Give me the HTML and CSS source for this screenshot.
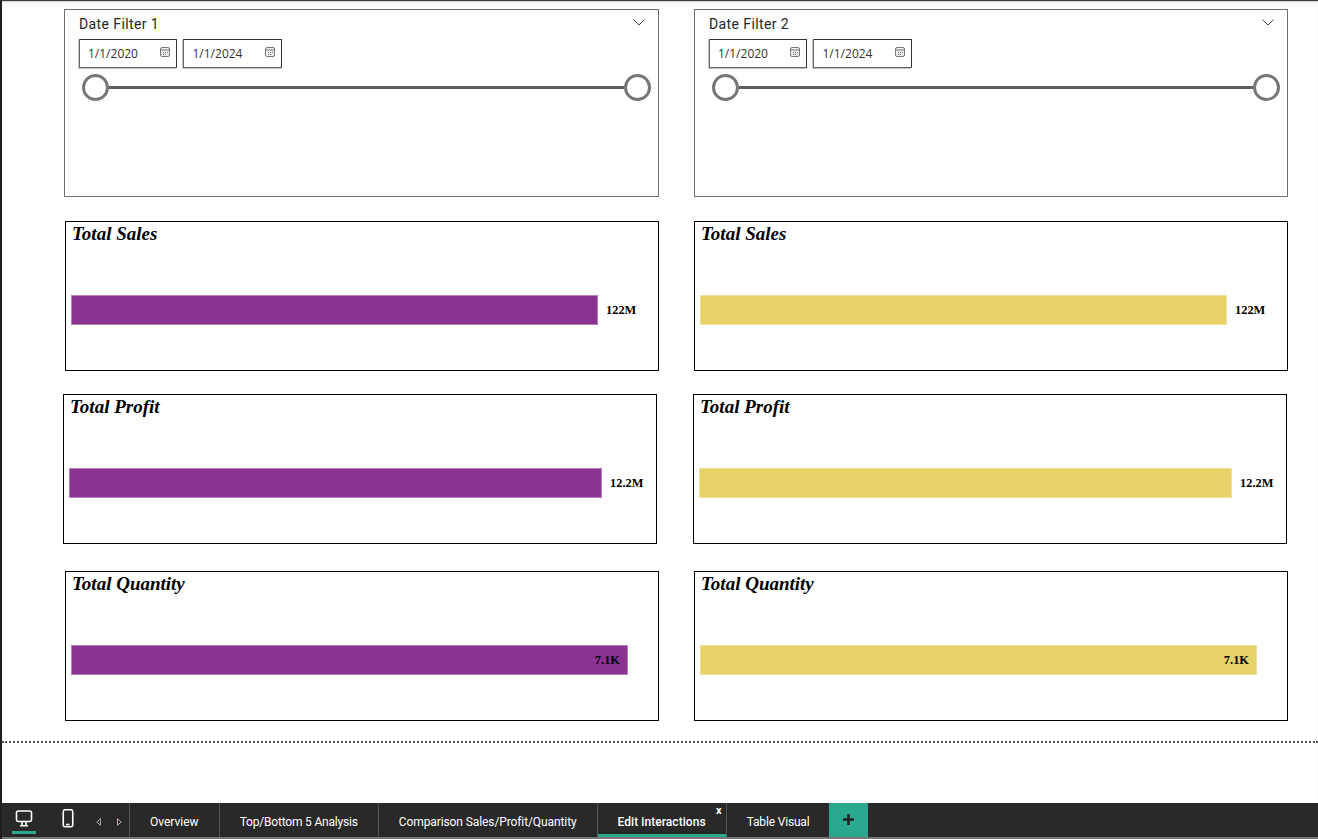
FILE: index.html
```html
<!DOCTYPE html>
<html>

<head>
    <meta charset="utf-8">
    <title>Edit interactions</title>
    <link rel="stylesheet" href="styles.css">
</head>

<body>
    <div class="app">
        <div class="canvas">
            <div class="row row-slicers">
                <div class="slicer">
                    <div class="slicer-head">
                        <span class="slicer-title">Date Filter 1</span>
                        <svg class="chevron" width="12" height="7" viewBox="0 0 12 7"><path d="M0.5 0.5 L6 6 L11.5 0.5" /></svg>
                    </div>
                    <div class="dates">
                        <div class="date"><span>1/1/2020</span><svg class="cal" width="10" height="10" viewBox="0 0 10 10"><rect x="0.5" y="0.5" width="9" height="9" rx="1.5" /><path d="M0.5 3 H9.5 M3 5.5 H4 M5 5.5 H6 M7 5.5 H8 M3 7.5 H4 M5 7.5 H6" /></svg></div>
                        <div class="date"><span>1/1/2024</span><svg class="cal" width="10" height="10" viewBox="0 0 10 10"><rect x="0.5" y="0.5" width="9" height="9" rx="1.5" /><path d="M0.5 3 H9.5 M3 5.5 H4 M5 5.5 H6 M7 5.5 H8 M3 7.5 H4 M5 7.5 H6" /></svg></div>
                    </div>
                    <div class="slider"><span class="thumb"></span><span class="track"></span><span class="thumb"></span></div>
                </div>
                <div class="slicer">
                    <div class="slicer-head">
                        <span class="slicer-title">Date Filter 2</span>
                        <svg class="chevron" width="12" height="7" viewBox="0 0 12 7"><path d="M0.5 0.5 L6 6 L11.5 0.5" /></svg>
                    </div>
                    <div class="dates">
                        <div class="date"><span>1/1/2020</span><svg class="cal" width="10" height="10" viewBox="0 0 10 10"><rect x="0.5" y="0.5" width="9" height="9" rx="1.5" /><path d="M0.5 3 H9.5 M3 5.5 H4 M5 5.5 H6 M7 5.5 H8 M3 7.5 H4 M5 7.5 H6" /></svg></div>
                        <div class="date"><span>1/1/2024</span><svg class="cal" width="10" height="10" viewBox="0 0 10 10"><rect x="0.5" y="0.5" width="9" height="9" rx="1.5" /><path d="M0.5 3 H9.5 M3 5.5 H4 M5 5.5 H6 M7 5.5 H8 M3 7.5 H4 M5 7.5 H6" /></svg></div>
                    </div>
                    <div class="slider"><span class="thumb"></span><span class="track"></span><span class="thumb"></span></div>
                </div>
            </div>

            <div class="row row-sales">
                <div class="card">
                    <div class="card-title">Total Sales</div>
                    <div class="bar-line">
                        <div class="bar purple" style="width: 527px"></div>
                        <span class="bar-value">122M</span>
                    </div>
                </div>
                <div class="card">
                    <div class="card-title">Total Sales</div>
                    <div class="bar-line">
                        <div class="bar yellow" style="width: 527px"></div>
                        <span class="bar-value">122M</span>
                    </div>
                </div>
            </div>

            <div class="row row-profit">
                <div class="card">
                    <div class="card-title">Total Profit</div>
                    <div class="bar-line">
                        <div class="bar purple" style="width: 533px"></div>
                        <span class="bar-value">12.2M</span>
                    </div>
                </div>
                <div class="card">
                    <div class="card-title">Total Profit</div>
                    <div class="bar-line">
                        <div class="bar yellow" style="width: 533px"></div>
                        <span class="bar-value">12.2M</span>
                    </div>
                </div>
            </div>

            <div class="row row-quantity">
                <div class="card">
                    <div class="card-title">Total Quantity</div>
                    <div class="bar-line">
                        <div class="bar purple" style="width: 557px"><span class="bar-value">7.1K</span></div>
                    </div>
                </div>
                <div class="card">
                    <div class="card-title">Total Quantity</div>
                    <div class="bar-line">
                        <div class="bar yellow" style="width: 557px"><span class="bar-value">7.1K</span></div>
                    </div>
                </div>
            </div>

            <div class="page-end"></div>
        </div>

        <div class="tabbar">
            <div class="views">
                <div class="view view-active">
                    <svg width="18" height="18" viewBox="0 0 18 18"><rect x="1.5" y="2" width="15" height="10.5" rx="2" /><path d="M5 16.8 H13 M7 12.5 V16 M11 12.5 V16" /></svg>
                </div>
                <div class="view view-phone">
                    <svg width="12" height="19" viewBox="0 0 12 19"><rect x="1.25" y="0.75" width="9.5" height="17" rx="2" /><path d="M4 15.5 H7.5" /></svg>
                </div>
                <div class="arrows">
                    <svg width="5" height="8" viewBox="0 0 5 8"><path d="M4.5 0.7 L0.8 4 L4.5 7.3 Z" /></svg>
                    <svg class="arrow-next" width="5" height="8" viewBox="0 0 5 8"><path d="M0.5 0.7 L4.2 4 L0.5 7.3 Z" /></svg>
                </div>
            </div>
            <div class="tab">Overview</div>
            <div class="tab tab-top">Top/Bottom 5 Analysis</div>
            <div class="tab tab-comparison">Comparison Sales/Profit/Quantity</div>
            <div class="tab tab-active">Edit interactions<span class="tab-close">x</span></div>
            <div class="tab tab-last">Table Visual</div>
            <div class="tab-add">
                <svg width="11" height="11" viewBox="0 0 11 11"><path d="M5.5 0 V11 M0 5.5 H11" /></svg>
            </div>
        </div>
    </div>
</body>

</html>
```

FILE: styles.css
```css
* {
    box-sizing: border-box;
}

body {
    margin: 0;
    background-color: white;
    overflow: hidden;
}

.app {
    display: flex;
    flex-direction: column;
    height: 839px;
    border-left: 2px solid #1f1f1f;
}

.canvas {
    flex: 1;
    border-top: 1px solid #3a3a3a;
    box-shadow: inset 0 2px 2px -1px #cfcfcf;
    padding-top: 8px;
}

.row {
    display: flex;
    gap: 35px;
    padding-left: 63px;
}

.row-slicers {
    padding-left: 62px;
}

.row-sales {
    margin-top: 24px;
}

.row-profit {
    margin-top: 23px;
    padding-left: 61px;
    gap: 36px;
}

.row-quantity {
    margin-top: 27px;
}

/* slicers */
.slicer {
    width: 595px;
    height: 188px;
    border: 1px solid #707070;
    padding: 0 7px 0 14px;
    font-family: "Open Sans", sans-serif;
    color: #333;
}

.slicer + .slicer {
    width: 594px;
}

.slicer-head {
    display: flex;
    justify-content: space-between;
    height: 29px;
    padding-top: 5px;
}

.slicer-title {
    font-family: Roboto, sans-serif;
    font-size: 14px;
    letter-spacing: 0.4px;
    line-height: 18px;
    color: #252525;
}

.chevron {
    margin: 4px 6px 0 0;
    fill: none;
    stroke: #444;
    stroke-width: 1;
}

.dates {
    display: flex;
    gap: 6px;
}

.date {
    display: flex;
    justify-content: space-between;
    width: 98px;
    height: 29px;
    padding: 0 6px 0 8px;
    border: 1px solid #333;
    border-left-color: #666;
    border-bottom-color: #666;
    box-shadow: -1px 1px 0 #c4c4c4;
    font-size: 12px;
    line-height: 27px;
}

.date + .date {
    width: 99px;
    padding: 0 6px 0 8.5px;
}

.cal {
    margin-top: 7px;
    fill: #eee;
    stroke: #777;
    stroke-width: 1;
}

.slider {
    display: flex;
    align-items: center;
    margin: 6px 0 0 3px;
}

.thumb {
    width: 27px;
    height: 27px;
    border: 3px solid #777;
    border-radius: 50%;
    background-color: white;
}

.track {
    flex: 1;
    height: 3px;
    background-color: #5f5f5f;
}

/* bar cards */
.card {
    width: 594px;
    height: 150px;
    border: 1px solid black;
    padding: 0 5px;
    font-family: "Liberation Serif", serif;
    color: black;
}

.card-title {
    height: 73px;
    padding: 2px 0 0 1px;
    font-size: 19px;
    font-weight: bold;
    font-style: italic;
    line-height: 20px;
}

.bar-line {
    display: flex;
    align-items: center;
    gap: 8px;
    height: 30px;
}

.bar {
    display: flex;
    align-items: center;
    justify-content: flex-end;
    height: 30px;
    padding-right: 7px;
    border: 1px solid transparent;
    background-clip: padding-box;
}

.purple {
    background-color: #8a3391;
    border-color: #b47fb9;
}

.yellow {
    background-color: #e8d166;
    border-color: #f0e09a;
}

.bar-value {
    font-size: 12.4px;
    font-weight: bold;
}

.page-end {
    margin-top: 20px;
    border-top: 2px dotted #555;
}

/* tabs */
.tabbar {
    display: flex;
    height: 36px;
    background-color: #292929;
    border-bottom: 2px solid #777;
    font-family: Roboto, sans-serif;
    font-size: 12px;
    color: white;
}

.views {
    display: flex;
    width: 128px;
    border-right: 1px solid #555;
}

.view {
    display: flex;
    justify-content: center;
    width: 24px;
    margin-left: 10px;
    padding-top: 6px;
    height: 31px;
}

.view svg {
    fill: none;
    stroke: white;
    stroke-width: 1.6;
}

.view-active {
    border-bottom: 3px solid #2aa98f;
}

.view-phone {
    margin-left: 20px;
}

.arrows {
    display: flex;
    gap: 16px;
    margin-left: 16px;
    padding-top: 15px;
}

.arrows svg {
    fill: none;
    stroke: #aaa;
}

.arrows .arrow-next {
    stroke: #b9a9a0;
}

.tab {
    position: relative;
    display: flex;
    align-items: center;
    padding: 3px 20px 0;
    border-right: 1px solid #555;
    white-space: nowrap;
}

.tab-top {
    letter-spacing: -0.19px;
}

.tab-comparison {
    letter-spacing: -0.1px;
}

.tab-active {
    font-weight: 500;
    letter-spacing: 0.06px;
    border-bottom: 3px solid #2aa98f;
    padding-top: 6px;
}

.tab-last {
    border-right: none;
    letter-spacing: -0.17px;
}

.tab-close {
    position: absolute;
    top: 0;
    right: 4px;
    font-size: 11px;
    font-weight: bold;
    line-height: 16px;
}

.tab-add {
    display: flex;
    align-items: center;
    justify-content: center;
    width: 39px;
    padding-bottom: 2px;
    background-color: #2aa98f;
}

.tab-add svg {
    stroke: #222;
    stroke-width: 2.5;
}
```
